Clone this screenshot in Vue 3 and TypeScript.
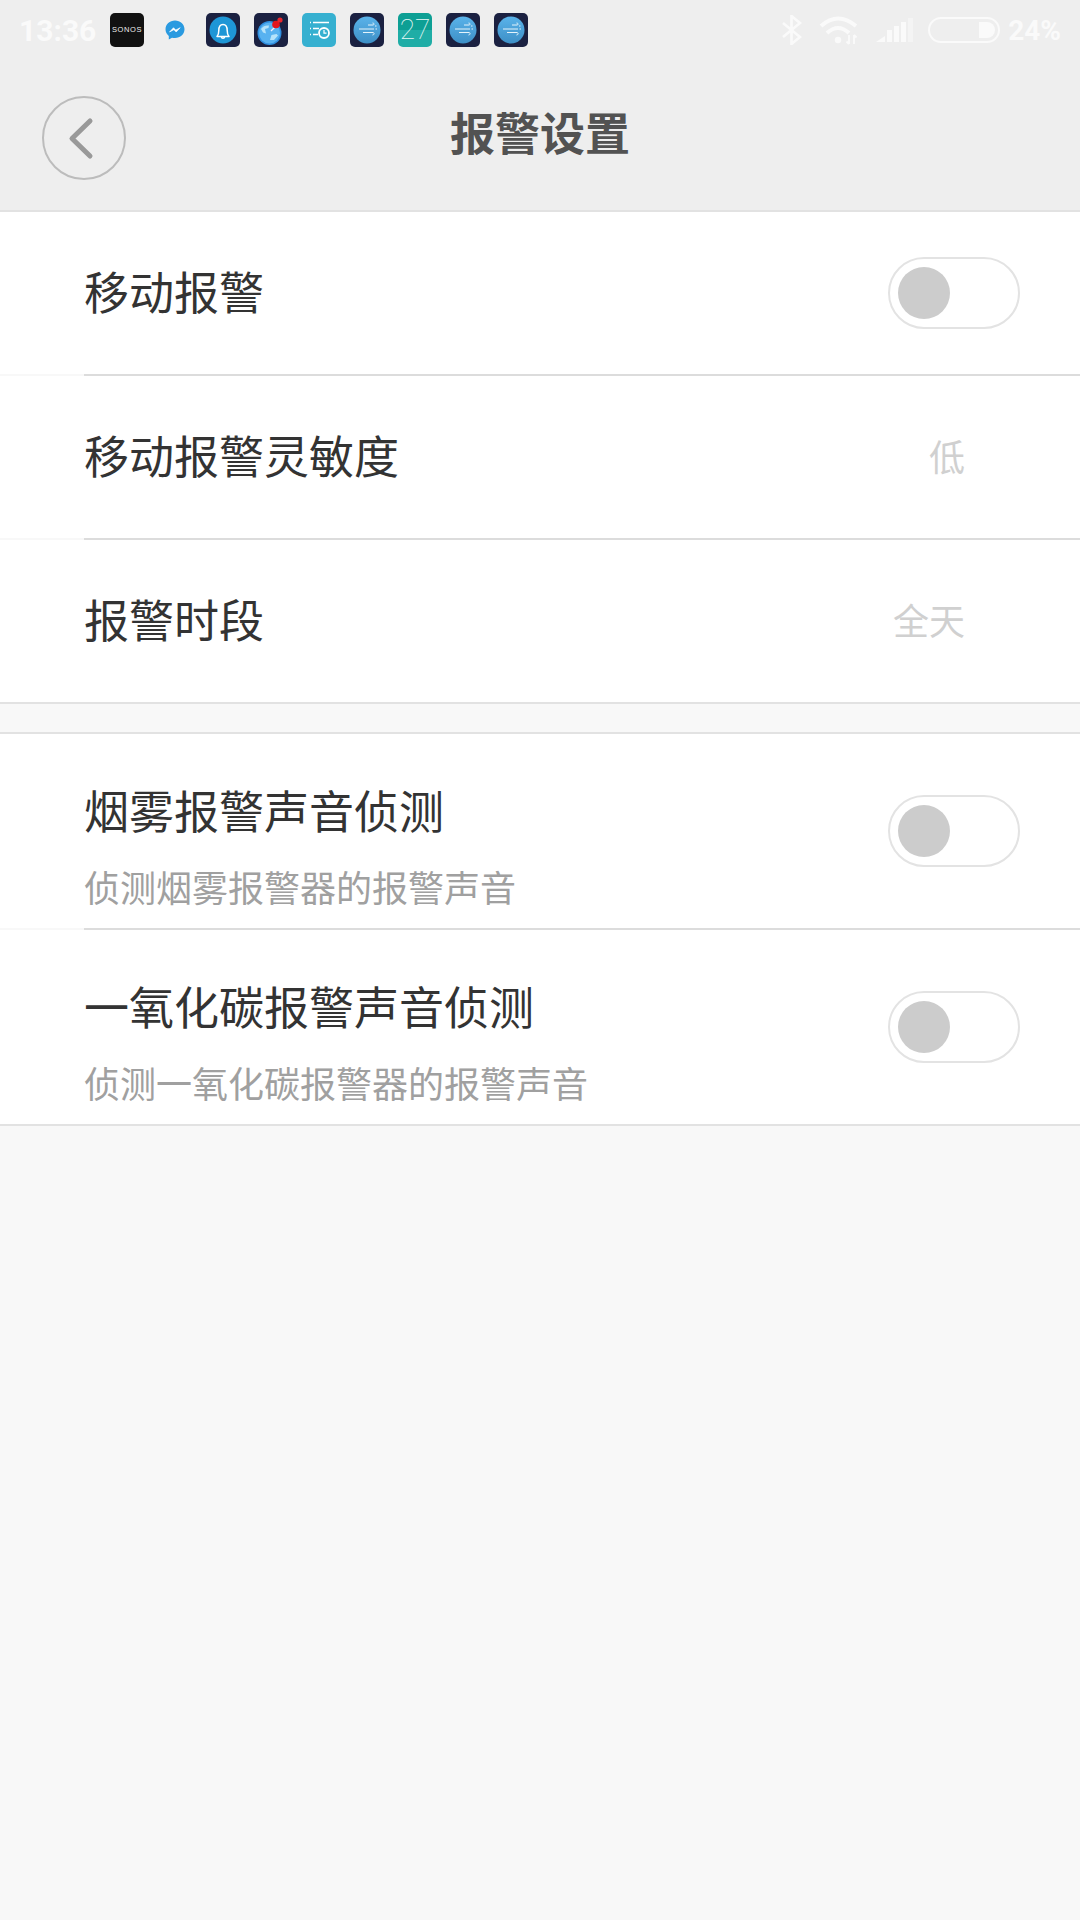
<template>
 <div class="page">
  <header class="top">
   <div class="status">
    <span class="time">13:36</span>
    <div class="apps">
     <div class="app sonos">SONOS</div>
     <div class="app plain">
      <svg viewBox="0 0 34 34" width="34" height="34">
       <path d="M17 7.500c-5.300 0-9.500 3.900-9.500 8.800 0 2.700 1.300 5.100 3.300 6.700v3.500l3.200-1.800c1 .3 1.900.4 3 .4 5.300 0 9.500-3.900 9.500-8.800S22.300 7.500 17 7.500z" fill="#2a9ae0" />
       <path d="M11.500 19l4-4.300 2.300 2.300 4.400-2.300-4 4.300-2.300-2.300z" fill="#fff" stroke="#fff" stroke-width=".6" />
      </svg>
     </div>
     <div class="app navy">
      <svg viewBox="0 0 34 34" width="34" height="34">
       <circle cx="17" cy="17" r="13.500" fill="#1e96d6" />
       <path d="M11 23.500c1.500-1.500 1.800-3 1.800-6 0-3.500 1.700-6 4.200-6s4.200 2.500 4.200 6c0 3 .3 4.500 1.800 6zM15.300 23.800c.2 1 .8 1.500 1.700 1.500s1.500-.5 1.700-1.500" fill="none" stroke="#fff" stroke-width="1.500" stroke-linejoin="round" />
      </svg>
     </div>
     <div class="app navy">
      <svg viewBox="0 0 34 34" width="34" height="34">
       <circle cx="15.500" cy="20" r="12" fill="#2f8fe0" />
       <circle cx="15.500" cy="20" r="10.500" fill="#58b2f0" />
       <path d="M7 16c2-3 5-4 8-3.500l-.5 2.500-3.500 1 1 4.500-3-1zM16 27l1.500-5 5-1 1.500 1.500-4 4.500z" fill="#b5e3fa" />
       <path d="M17 18l4-4" stroke="#eef" stroke-width="1.200" />
       <circle cx="22" cy="11.500" r="3.800" fill="#e2141c" />
       <circle cx="26" cy="7" r="2.600" fill="#e9262c" />
      </svg>
     </div>
     <div class="app teal">
      <svg viewBox="0 0 34 34" width="34" height="34" fill="none" stroke="#fff">
       <path d="M8 9.500h1M11 9.500h16M8 15.500h1M11 15.500h6M8 21.500h1M11 21.500h5" stroke-width="1.500" />
       <circle cx="22" cy="20" r="5" stroke-width="1.800" />
       <path d="M22 17v3.200h2.500" stroke-width="1.200" />
      </svg>
     </div>
     <div class="app navy">
      <svg viewBox="0 0 34 34" width="34" height="34">
       <defs>
        <linearGradient id="wind" x1="0" y1="0" x2="0" y2="1">
         <stop offset="0" stop-color="#5ab3ea" />
         <stop offset="1" stop-color="#3d8fc6" />
        </linearGradient>
       </defs>
       <circle cx="17" cy="17" r="13.500" fill="url(#wind)" />
       <path d="M18 12h5c1.500 0 1.500-2-.5-2M9 16h15M13 19.500h10c1.500 0 1.500 2.500-.5 2.500" fill="none" stroke="#e4f3fb" stroke-width="1" />
       <path d="M25 13h1.500M25.500 16h1.500" stroke="#e4f3fb" stroke-width="1" />
      </svg>
     </div>
     <div class="app calendar">27</div>
     <div v-for="n in 2" :key="n" class="app navy">
      <svg viewBox="0 0 34 34" width="34" height="34">
       <circle cx="17" cy="17" r="13.500" fill="url(#wind)" />
       <path d="M18 12h5c1.500 0 1.500-2-.5-2M9 16h15M13 19.500h10c1.500 0 1.500 2.500-.5 2.500" fill="none" stroke="#e4f3fb" stroke-width="1" />
       <path d="M25 13h1.500M25.500 16h1.500" stroke="#e4f3fb" stroke-width="1" />
      </svg>
     </div>
    </div>
    <div class="sys">
     <svg class="bt" viewBox="0 0 20 30" width="20" height="30" fill="none" stroke="#fafafa" stroke-width="2.600">
      <path d="M1 8l17 14-8.500 7V1L18 8 1 22" />
     </svg>
     <svg class="wifi" viewBox="0 0 39 30" width="39" height="30" fill="none" stroke="#fafafa">
      <path d="M2 11Q19-4 37 11" stroke-width="4" />
      <path d="M8 18Q19 8 30 18" stroke-width="4" />
      <circle cx="19" cy="25" r="3.200" fill="#fafafa" stroke="none" />
      <path d="M30 20v9M27.500 26.500l2.500 2.500M35 20v9M37.500 22.500 35 20" stroke-width="1.800" />
     </svg>
     <svg class="signal" viewBox="0 0 37 25" width="37" height="25">
      <path d="M0 24l9-6v6z" fill="#fafafa" />
      <rect x="11" y="12" width="5" height="12" fill="#fafafa" />
      <rect x="18" y="8" width="5" height="16" fill="#fafafa" />
      <rect x="25" y="4" width="5" height="20" fill="#fafafa" />
      <rect x="32" y="0" width="5" height="24" fill="#f4f4f4" />
     </svg>
     <div class="battery"><span class="level"></span></div>
     <span class="percent">24%</span>
    </div>
   </div>
   <div class="titlebar">
    <button class="back">
     <svg viewBox="0 0 30 44" width="30" height="44" fill="none" stroke="#999" stroke-width="5" stroke-linecap="round" stroke-linejoin="round">
      <path d="M24 5 6 22.500 24 40" />
     </svg>
    </button>
    <h1>报警设置</h1>
   </div>
  </header>

  <section v-for="(group, g) in groups" :key="g" class="group">
   <div v-for="row in group" :key="row.title" class="row" :class="{ tall: row.desc }">
    <div class="label">
     <div class="name">{{ row.title }}</div>
     <div v-if="row.desc" class="desc">{{ row.desc }}</div>
    </div>
    <span v-if="row.value" class="value">{{ row.value }}</span>
    <div v-else class="switch"><span class="knob"></span></div>
   </div>
  </section>
 </div>
</template>

<script setup lang="ts">
interface Row {
  title: string;
  desc?: string;
  value?: string;
}

const groups: Row[][] = [
  [
    { title: '移动报警' },
    { title: '移动报警灵敏度', value: '低' },
    { title: '报警时段', value: '全天' },
  ],
  [
    { title: '烟雾报警声音侦测', desc: '侦测烟雾报警器的报警声音' },
    { title: '一氧化碳报警声音侦测', desc: '侦测一氧化碳报警器的报警声音' },
  ],
];
</script>

<style>
body {
 background: #f8f8f8;
}
</style>

<style scoped>
.page {
 min-height: 1920px;
 background: #f8f8f8;
 font-family: "Noto Sans CJK SC", sans-serif;
}

.top {
 background: #eee;
 border-bottom: 2px solid #e2e2e2;
 height: 210px;
}

.status {
 display: flex;
 align-items: center;
 height: 60px;
 padding: 0 19px 0 19px;
}

.time {
 width: 91px;
 color: #fafafa;
 font: 700 30px Roboto, sans-serif;
}

.apps {
 display: flex;
 gap: 14px;
}

.app {
 width: 34px;
 height: 34px;
 border-radius: 5px;
 overflow: hidden;
}

.sonos {
 background: #111;
 color: #eee;
 font: 500 7.500px/34px "Liberation Sans", sans-serif;
 letter-spacing: 0.6px;
 text-align: center;
}

.navy {
 background: #1b2141;
}

.teal {
 background: #36b0d0;
}

.calendar {
 background: linear-gradient(#0d9f94 50%, #1fada6 50%);
 color: #e8f8f6;
 font: 100 28px/34px Roboto, sans-serif;
 text-align: center;
}

.sys {
 display: flex;
 align-items: center;
 margin-left: auto;
}

.wifi {
 margin-left: 17px;
}

.signal {
 margin-left: 18px;
}

.battery {
 box-sizing: border-box;
 width: 72px;
 height: 26px;
 margin-left: 15px;
 padding: 3px;
 border: 2px solid #fafafa;
 border-radius: 13px;
 display: flex;
 justify-content: flex-end;
}

.level {
 width: 16px;
 background: #fafafa;
 border-radius: 0 8px 8px 0;
}

.percent {
 margin-left: 8px;
 color: #fafafa;
 font: 700 28px Roboto, sans-serif;
}

.titlebar {
 position: relative;
 display: flex;
 align-items: center;
 justify-content: center;
 height: 150px;
}

.titlebar h1 {
 margin: 0 0 6px;
 color: #525252;
 font-size: 45px;
 font-weight: 700;
 line-height: 60px;
}

.back {
 position: absolute;
 left: 42px;
 top: 36px;
 width: 84px;
 height: 84px;
 padding: 0 6px 0 0;
 display: flex;
 align-items: center;
 justify-content: center;
 background: transparent;
 border: 2px solid #bcbcbc;
 border-radius: 50%;
}

.group {
 background: #fff;
}

.group + .group {
 margin-top: 28px;
 border-top: 2px solid #e2e2e2;
}

.row {
 position: relative;
 display: flex;
 align-items: center;
 justify-content: space-between;
 box-sizing: border-box;
 height: 164px;
 padding: 0 60px 2px 84px;
}

.row.tall {
 height: 196px;
}

.row::after {
 content: "";
 position: absolute;
 bottom: 0;
 left: 0;
 right: 0;
 height: 2px;
 background: linear-gradient(90deg, #f8f8f8 84px, #dcdcdc 84px);
}

.row:last-child::after {
 background: #e2e2e2;
}

.label {
 margin-bottom: 5px;
}

.tall .label {
 margin: 28px 0 0;
}

.name {
 color: #333;
 font-size: 45px;
 line-height: 60px;
}

.desc {
 margin-top: 22px;
 color: #a0a0a0;
 font-size: 36px;
 line-height: 48px;
}

.value {
 margin: 0 55px 5px 0;
 color: #d0d0d0;
 font-size: 36px;
}

.switch {
 box-sizing: border-box;
 width: 132px;
 height: 72px;
 padding: 8px;
 border: 2px solid #e3e3e3;
 border-radius: 36px;
}

.knob {
 display: block;
 width: 52px;
 height: 52px;
 background: #ccc;
 border-radius: 50%;
}
</style>
